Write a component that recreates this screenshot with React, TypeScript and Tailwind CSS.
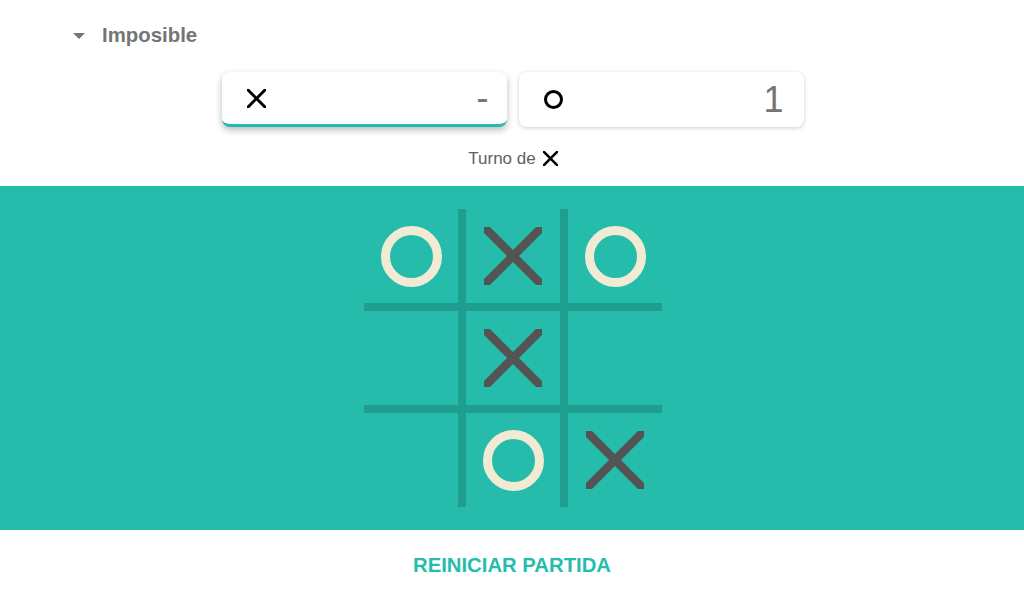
import React from 'react';

type Mark = 'x' | 'o' | null;

const board: Mark[] = ['o', 'x', 'o', null, 'x', null, null, 'o', 'x'];

function XIcon({ size, stroke, color }: { size: number; stroke: number; color: string }) {
  return (
    <svg width={size} height={size} viewBox={`0 0 ${size} ${size}`}>
      <line x1="0" y1="0" x2={size} y2={size} stroke={color} strokeWidth={stroke} />
      <line x1={size} y1="0" x2="0" y2={size} stroke={color} strokeWidth={stroke} />
    </svg>
  );
}

function OIcon({ size, stroke, color }: { size: number; stroke: number; color: string }) {
  return (
    <svg width={size} height={size} viewBox={`0 0 ${size} ${size}`}>
      <circle cx={size / 2} cy={size / 2} r={(size - stroke) / 2} fill="none" stroke={color} strokeWidth={stroke} />
    </svg>
  );
}

export default function App() {
  return (
    <div className="w-[1024px] h-[590px] bg-white font-['Liberation_Sans',Arial,sans-serif] overflow-hidden">
      {/* difficulty */}
      <div className="h-[68px] flex items-center pl-[73px] pt-[3px]">
        <svg width="12" height="6" viewBox="0 0 12 6" className="mr-[17px]">
          <path d="M0 0 L12 0 L6 6 Z" fill="#757575" />
        </svg>
        <span className="text-[20.4px] font-bold text-[#757575]">Imposible</span>
      </div>

      {/* score cards */}
      <div className="flex justify-center gap-3 mt-[4px] pl-[1px]">
        <div className="w-[285px] h-[55px] rounded-lg bg-white flex items-center justify-between pl-[25px] pr-[18px] border-b-[3px] border-[#26bcac] shadow-[0_3px_7px_rgba(0,0,0,0.28)]">
          <XIcon size={19} stroke={3} color="#000" />
          <span className="text-[36px] text-[#757575] leading-none">-</span>
        </div>
        <div className="w-[285px] h-[55px] rounded-lg bg-white flex items-center justify-between pl-[25px] pr-[20px] shadow-[0_1px_4px_rgba(0,0,0,0.2)]">
          <OIcon size={19} stroke={3} color="#000" />
          <span className="text-[36px] text-[#757575] leading-none">1</span>
        </div>
      </div>

      {/* turn */}
      <div className="h-[59px] flex items-center justify-center gap-[7px] pt-[4px] pl-[2px]">
        <span className="text-[17px] text-[#616161]">Turno de</span>
        <XIcon size={15} stroke={2.6} color="#000" />
      </div>

      {/* board */}
      <div className="h-[344px] bg-[#26bcac] flex justify-center pt-[23px] pl-[2px]">
        <div className="grid grid-cols-[94px_94px_94px] grid-rows-[94px_94px_94px] gap-2 bg-[#1f9e8f] h-[298px]">
          {board.map((m, i) => (
            <div key={i} className="bg-[#26bcac] flex items-center justify-center">
              {m === 'x' && <XIcon size={58} stroke={8.5} color="#545454" />}
              {m === 'o' && <OIcon size={61} stroke={9} color="#f2ebd3" />}
            </div>
          ))}
        </div>
      </div>

      {/* restart */}
      <div className="h-[70px] flex items-center justify-center">
        <button className="text-[20.3px] font-bold text-[#26bcac]">REINICIAR PARTIDA</button>
      </div>
    </div>
  );
}
